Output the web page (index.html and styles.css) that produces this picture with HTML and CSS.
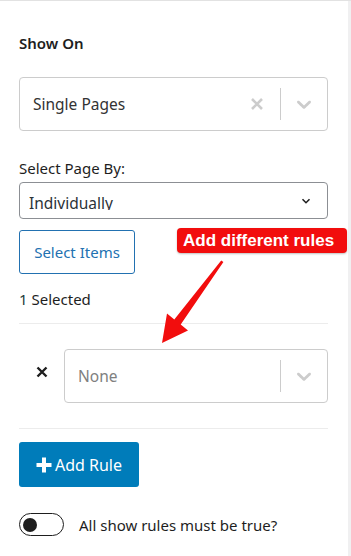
FILE: index.html
```html
<!DOCTYPE html>
<html lang="en">
<head>
  <meta charset="UTF-8">
  <title>Show On Rules</title>
  <meta name="viewport" content="width=device-width, initial-scale=1.0">
  <link rel="stylesheet" href="styles.css">
</head>
<body>

<div class="page">
  <div class="panel">
    <h3 class="panel-title">Show On</h3>

    <div class="rs-control">
      <div class="rs-value">Single Pages</div>
      <div class="rs-indicators">
        <span class="rs-clear">
          <svg width="14" height="14" viewBox="0 0 14 14"><path d="M2 2l10 10M12 2L2 12" stroke="currentColor" stroke-width="2.6"/></svg>
        </span>
        <span class="rs-sep"></span>
        <span class="rs-arrow">
          <svg width="24" height="24" viewBox="0 0 20 20"><path d="M4.516 7.548c0.436-0.446 1.043-0.481 1.576 0l3.908 3.747 3.908-3.747c0.533-0.481 1.141-0.446 1.574 0 0.436 0.445 0.408 1.197 0 1.615-0.406 0.418-4.695 4.502-4.695 4.502-0.217 0.223-0.502 0.335-0.787 0.335s-0.57-0.112-0.789-0.335c0 0-4.287-4.084-4.695-4.502s-0.436-1.17 0-1.615z" fill="currentColor"/></svg>
        </span>
      </div>
    </div>

    <label class="field-label">Select Page By:</label>
    <div class="plain-select">
      <span class="plain-value">Individually</span>
      <svg class="plain-arrow" width="14" height="14" viewBox="0 0 24 24"><path d="M6 9l6 6 6-6" fill="none" stroke="currentColor" stroke-width="2.6"/></svg>
    </div>

    <button class="btn-outline">Select Items</button>

    <div class="selected-count"><span class="count-num">1</span> Selected</div>

    <div class="rule-list">
      <div class="rule-row">
        <span class="rule-remove">
          <svg width="12" height="12" viewBox="0 0 12 12"><path d="M1.5 1.5l9 9M10.5 1.5l-9 9" stroke="currentColor" stroke-width="2.4"/></svg>
        </span>
        <div class="rs-control rule-select">
          <div class="rs-value placeholder">None</div>
          <div class="rs-indicators">
            <span class="rs-sep"></span>
            <span class="rs-arrow">
              <svg width="24" height="24" viewBox="0 0 20 20"><path d="M4.516 7.548c0.436-0.446 1.043-0.481 1.576 0l3.908 3.747 3.908-3.747c0.533-0.481 1.141-0.446 1.574 0 0.436 0.445 0.408 1.197 0 1.615-0.406 0.418-4.695 4.502-4.695 4.502-0.217 0.223-0.502 0.335-0.787 0.335s-0.57-0.112-0.789-0.335c0 0-4.287-4.084-4.695-4.502s-0.436-1.17 0-1.615z" fill="currentColor"/></svg>
            </span>
          </div>
        </div>
      </div>
    </div>

    <button class="btn-primary">
      <svg width="16" height="16" viewBox="0 0 16 16"><path d="M8 0.5v15M0.5 8h15" stroke="currentColor" stroke-width="4"/></svg>
      Add Rule
    </button>

    <div class="toggle-row">
      <span class="toggle"><span class="knob"></span></span>
      <span class="toggle-text">All show rules must be true?</span>
    </div>
  </div>

  <div class="callout">Add different rules</div>
  <svg class="callout-arrow" width="351" height="556" viewBox="0 0 351 556">
    <polygon points="221.2,260.4 223.4,262 180.7,324.4 188,330.5 162,343 167,313.5 174.3,319.6" fill="#f20d0d"/>
  </svg>
</div>

</body>
</html>
```

FILE: styles.css
```css
* {
  box-sizing: border-box;
  margin: 0;
  padding: 0;
}

body {
  background: #f0f0f1;
  font-family: 'Noto Sans', 'Open Sans', sans-serif;
  color: #1e1e1e;
}

.page {
  position: relative;
  width: 351px;
  height: 556px;
  overflow: hidden;
  border-top: 1px solid #e2e2e2;
}

.panel {
  width: 348px;
  height: 555px;
  background: #fff;
  padding: 32px 20px 0 19px;
}

.panel-title {
  font-size: 15px;
  font-weight: 600;
  line-height: 20px;
  margin-bottom: 24px;
}

.rs-control {
  height: 54px;
  border: 1px solid #ccc;
  border-radius: 4px;
  display: flex;
  align-items: center;
  background: #fff;
}

.rs-value {
  flex: 1;
  padding-left: 13px;
  font-size: 15.5px;
  color: #333;
}

.rs-value.placeholder {
  color: #808080;
}

.rs-indicators {
  display: flex;
  align-items: center;
  align-self: stretch;
  padding: 10px 0;
}

.rs-clear,
.rs-arrow {
  display: flex;
  align-items: center;
  color: #ccc;
}

.rs-clear {
  padding: 0 16px 0 8px;
}

.rs-arrow {
  padding: 0 11px 0 11px;
}

.rs-sep {
  width: 1px;
  align-self: stretch;
  background: #ccc;
}

.field-label {
  display: block;
  font-size: 15px;
  line-height: 20px;
  margin: 27px 0 4px;
}

.plain-select {
  height: 37px;
  border: 1px solid #8c8f94;
  border-radius: 4px;
  display: flex;
  align-items: center;
  padding: 0 14px 0 9px;
}

.plain-value {
  flex: 1;
  font-size: 15.5px;
  line-height: 22px;
  height: 18px;
  overflow: hidden;
  color: #2c3338;
}

.plain-arrow {
  color: #1e1e1e;
}

.btn-outline {
  margin-top: 11px;
  height: 44px;
  width: 116px;
  background: #fff;
  border: 1px solid #2271b1;
  border-radius: 3px;
  color: #2271b1;
  font-family: inherit;
  font-size: 15px;
}

.selected-count {
  margin-top: 15px;
  font-size: 15px;
  line-height: 20px;
}

.count-num {
  color: #1d3b3b;
}

.rule-list {
  margin-top: 14px;
  border-top: 1px solid #ececec;
  border-bottom: 1px solid #ececec;
  padding: 25px 0 25px;
}

.rule-row {
  display: flex;
  align-items: center;
}

.rule-remove {
  width: 45px;
  display: flex;
  justify-content: center;
  margin-top: -8px;
  color: #1e1e1e;
}

.rule-select {
  flex: 1;
}

.btn-primary {
  margin-top: 13px;
  height: 45px;
  width: 120px;
  display: flex;
  align-items: center;
  justify-content: center;
  gap: 3px;
  background: #007cba;
  border: none;
  border-radius: 3px;
  color: #fff;
  font-family: inherit;
  font-size: 16px;
}

.toggle-row {
  margin-top: 26px;
  display: flex;
  align-items: center;
  gap: 15px;
}

.toggle {
  width: 45px;
  height: 23px;
  border: 1.5px solid #1e1e1e;
  border-radius: 12px;
  display: flex;
  align-items: center;
  padding-left: 3px;
}

.knob {
  width: 14px;
  height: 14px;
  border-radius: 50%;
  background: #1e1e1e;
}

.toggle-text {
  font-size: 15px;
  color: #1e1e1e;
}

.callout {
  position: absolute;
  left: 177px;
  top: 227px;
  width: 170px;
  height: 25px;
  background: #f20d0d;
  border-radius: 4px;
  box-shadow: 0 1px 2px rgba(0,0,0,0.25);
  color: #fff;
  font-family: 'Liberation Sans', Arial, sans-serif;
  font-weight: bold;
  font-size: 17px;
  line-height: 25px;
  padding-left: 6px;
  white-space: nowrap;
}

.callout-arrow {
  position: absolute;
  left: 0;
  top: -1px;
  pointer-events: none;
}
```
